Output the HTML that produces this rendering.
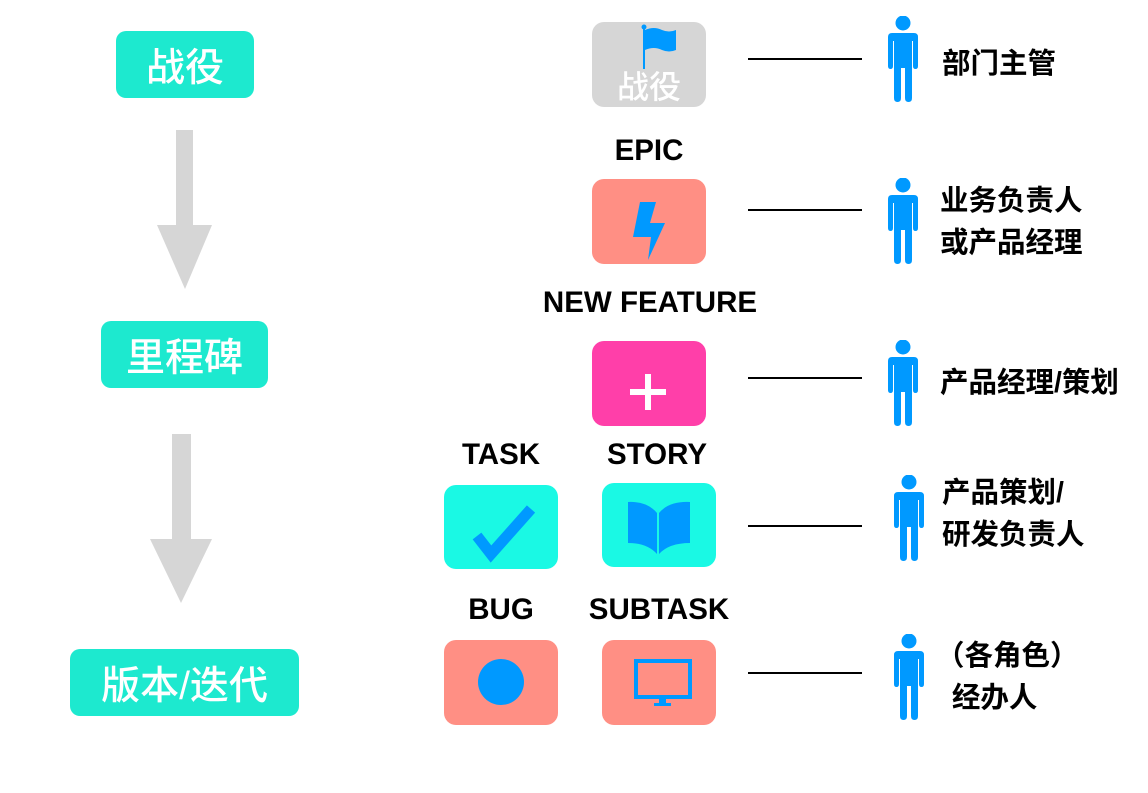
<!DOCTYPE html>
<html><head><meta charset="utf-8"><style>
body{margin:0;width:1148px;height:793px;background:#fff;position:relative;overflow:hidden;font-family:"Liberation Sans","Noto Sans CJK SC",sans-serif}
.a{position:absolute}
.lb{position:absolute;background:#1de9cf;border-radius:10px;color:#fff;font-size:39px;font-weight:500;display:flex;align-items:center;justify-content:center}
.box{position:absolute;border-radius:12px;display:flex;align-items:center;justify-content:center}
.t{position:absolute;font-weight:bold;font-size:29.5px;color:#000;text-align:center}
.ln{position:absolute;height:2px;background:#000;width:114px;left:748px}
.tx{position:absolute;font-size:28.5px;font-weight:bold;color:#000;line-height:42px}
</style></head><body>
<div class="lb" style="left:116px;top:31px;width:138px;height:67px">战役</div>
<div class="lb" style="left:101px;top:321px;width:167px;height:67px">里程碑</div>
<div class="lb" style="left:70px;top:649px;width:229px;height:67px">版本/迭代</div>
<svg class="a" style="left:150px;top:128px" width="70" height="480"><g fill="#d6d6d6"><rect x="26" y="2" width="17" height="98"/><polygon points="7,97 62,97 35,161"/><rect x="22" y="306" width="19" height="110"/><polygon points="0,411 62,411 31,475"/></g></svg>

<div class="box" style="left:592px;top:22px;width:114px;height:85px;background:#d6d6d6">
<svg class="a" style="left:0;top:0" width="114" height="85"><line x1="52" y1="5" x2="52" y2="47" stroke="#0099ff" stroke-width="2"/><circle cx="52" cy="5" r="2.5" fill="#0099ff"/><path d="M53 8 Q62 4 70 8 Q77 11 84 8 L84 28 Q77 31 70 28 Q62 24 53 28Z" fill="#0099ff"/></svg>
<span class="a" style="left:25px;top:40px;color:#fff;font-size:32px;font-weight:500">战役</span></div>
<div class="t" style="left:592px;top:134px;width:114px">EPIC</div>
<div class="box" style="left:592px;top:179px;width:114px;height:85px;background:#ff8f84"><svg width="114" height="85"><polygon points="48,23 64,23 58,44 73,44 56,81 59,58 41,58" fill="#0099ff"/></svg></div>
<div class="t" style="left:520px;top:286px;width:260px">NEW FEATURE</div>
<div class="box" style="left:592px;top:341px;width:114px;height:85px;background:#ff3fa9"><svg width="114" height="85"><rect x="38" y="48" width="36" height="6" fill="#fff"/><rect x="53" y="33" width="6" height="36" fill="#fff"/></svg></div>
<div class="t" style="left:444px;top:438px;width:114px">TASK</div>
<div class="t" style="left:600px;top:438px;width:114px">STORY</div>
<div class="box" style="left:444px;top:485px;width:114px;height:84px;background:#1af9e4"><svg width="114" height="84"><polyline points="33,51 47,69 87,24" fill="none" stroke="#0099ff" stroke-width="11"/></svg></div>
<div class="box" style="left:602px;top:483px;width:114px;height:84px;background:#1af9e4"><svg width="114" height="84"><path d="M26 19 Q45 18 55 30 L55 71 Q45 60 26 60Z M57 30 Q67 18 88 19 L88 60 Q67 60 57 71Z" fill="#0099ff"/></svg></div>
<div class="t" style="left:444px;top:593px;width:114px">BUG</div>
<div class="t" style="left:584px;top:593px;width:150px">SUBTASK</div>
<div class="box" style="left:444px;top:640px;width:114px;height:85px;background:#ff8f84"><svg width="114" height="85"><circle cx="57" cy="42" r="23" fill="#0099ff"/></svg></div>
<div class="box" style="left:602px;top:640px;width:114px;height:85px;background:#ff8f84"><svg width="114" height="85"><rect x="34" y="21" width="54" height="36" fill="none" stroke="#0099ff" stroke-width="4"/><rect x="57" y="57" width="7" height="8" fill="#0099ff"/><rect x="52" y="63" width="17" height="3" fill="#0099ff"/></svg></div>

<div class="ln" style="top:58px"></div>
<div class="ln" style="top:209px"></div>
<div class="ln" style="top:377px"></div>
<div class="ln" style="top:525px"></div>
<div class="ln" style="top:672px"></div>

<svg width="0" height="0" style="position:absolute"><defs><g id="p" fill="#0099ff"><circle cx="16" cy="7" r="7.5"/><path d="M5 17 H27 Q31 17 31 21 V50 Q31 53 28.5 53 Q26 53 26 50 V25 H25 V82 Q25 86 21.5 86 Q18 86 18 82 V52 H14 V82 Q14 86 10.5 86 Q7 86 7 82 V25 H6 V50 Q6 53 3.5 53 Q1 53 1 50 V21 Q1 17 5 17Z"/></g></defs></svg>
<svg class="a" style="left:887px;top:16px" width="32" height="87"><use href="#p"/></svg>
<svg class="a" style="left:887px;top:178px" width="32" height="87"><use href="#p"/></svg>
<svg class="a" style="left:887px;top:340px" width="32" height="87"><use href="#p"/></svg>
<svg class="a" style="left:893px;top:475px" width="32" height="87"><use href="#p"/></svg>
<svg class="a" style="left:893px;top:634px" width="32" height="87"><use href="#p"/></svg>

<div class="tx" style="left:942px;top:43px">部门主管</div>
<div class="tx" style="left:940px;top:180px">业务负责人<br>或产品经理</div>
<div class="tx" style="left:940px;top:362px">产品经理/策划</div>
<div class="tx" style="left:942px;top:472px">产品策划/<br>研发负责人</div>
<div class="tx" style="left:936px;top:635px">（各角色）<br>&nbsp;&nbsp;经办人</div>
</body></html>
